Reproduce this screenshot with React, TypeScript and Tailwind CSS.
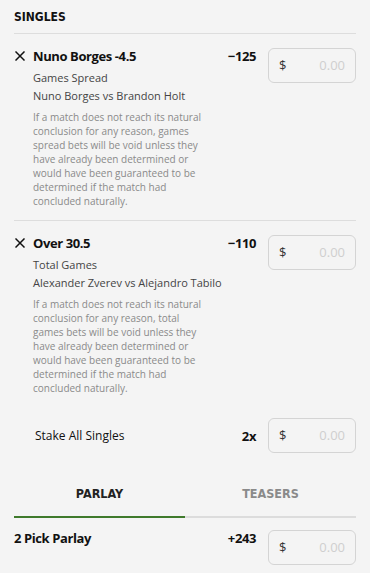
import React from "react";

const body = { fontFamily: '"Open Sans", "Liberation Sans", sans-serif' };
const cond = { fontFamily: '"DejaVu Sans Condensed", "DejaVu Sans", sans-serif' };

function StakeInput() {
  return (
    <div className="flex h-[35px] w-[88px] shrink-0 items-center justify-between rounded-[6px] border border-[#d4d4d4] px-[10px] text-[13px]">
      <span className="text-[#333]">$</span>
      <span className="text-[#cfcfcf]">0.00</span>
    </div>
  );
}

function CloseIcon() {
  return (
    <svg width="10" height="10" viewBox="0 0 10 10" className="mt-[5px] shrink-0">
      <path d="M1 1 L9 9 M9 1 L1 9" stroke="#111" strokeWidth="1.5" strokeLinecap="square" />
    </svg>
  );
}

type Single = {
  title: string;
  odds: string;
  market: string;
  match: string;
  rule: string[];
};

const singles: Single[] = [
  {
    title: "Nuno Borges -4.5",
    odds: "\u2212125",
    market: "Games Spread",
    match: "Nuno Borges vs Brandon Holt",
    rule: [
      "If a match does not reach its natural",
      "conclusion for any reason, games",
      "spread bets will be void unless they",
      "have already been determined or",
      "would have been guaranteed to be",
      "determined if the match had",
      "concluded naturally.",
    ],
  },
  {
    title: "Over 30.5",
    odds: "\u2212110",
    market: "Total Games",
    match: "Alexander Zverev vs Alejandro Tabilo",
    rule: [
      "If a match does not reach its natural",
      "conclusion for any reason, total",
      "games bets will be void unless they",
      "have already been determined or",
      "would have been guaranteed to be",
      "determined if the match had",
      "concluded naturally.",
    ],
  },
];

const heading = "text-[13px] font-bold leading-[20px] tracking-[-0.4px] text-[#111]";

function SingleRow({ bet, last }: { bet: Single; last?: boolean }) {
  return (
    <div className={`flex items-start pt-[12px] ${last ? "" : "border-b border-[#dddddd] pb-[12px]"}`}>
      <div className="flex flex-1 items-start">
        <div className="w-[19px] pl-[1px]">
          <CloseIcon />
        </div>
        <div className="flex-1">
          <div className={heading}>{bet.title}</div>
          <div className="mt-[3px] text-[11px] leading-[18px] text-[#444]">{bet.market}</div>
          <div className="text-[11px] leading-[18px] text-[#444]">{bet.match}</div>
          <p className="mt-[5px] text-[10px] leading-[14px] text-[#8a8a8a]">
            {bet.rule.map((line) => (
              <span key={line} className="block whitespace-nowrap">
                {line}
              </span>
            ))}
          </p>
        </div>
      </div>
      <div className={heading}>{bet.odds}</div>
      <div className="ml-[12px] mt-[2px]">
        <StakeInput />
      </div>
    </div>
  );
}

export default function App() {
  return (
    <main className="min-h-screen bg-[#f4f4f4] px-[14px]" style={body}>
      {/* Singles header */}
      <div className="flex h-[34px] items-center border-b border-[#dddddd] pt-[1px]">
        <h2 className="text-[12px] font-bold text-[#111]" style={cond}>
          SINGLES
        </h2>
      </div>

      {singles.map((bet, i) => (
        <SingleRow key={bet.title} bet={bet} last={i === singles.length - 1} />
      ))}

      {/* Stake all */}
      <div className="mt-[23px] flex items-center">
        <div className="flex-1 pl-[21px] text-[12px] text-[#111]">Stake All Singles</div>
        <div className={heading}>2x</div>
        <div className="ml-[12px]">
          <StakeInput />
        </div>
      </div>

      {/* Tabs */}
      <div className="mt-[31px] grid grid-cols-2">
        <div className="border-b-2 border-[#3f7a2c] pb-[12px] text-center text-[12.5px] font-bold leading-[20px] text-[#222]" style={cond}>
          PARLAY
        </div>
        <div className="border-b-2 border-[#dcdcdc] pb-[12px] text-center text-[12.5px] font-bold leading-[20px] text-[#8a8a8a]" style={cond}>
          TEASERS
        </div>
      </div>

      {/* Parlay */}
      <div className="mt-[10px] flex items-start">
        <div className={`flex-1 ${heading}`}>2 Pick Parlay</div>
        <div className={heading}>+243</div>
        <div className="ml-[12px] mt-[2px]">
          <StakeInput />
        </div>
      </div>
    </main>
  );
}
